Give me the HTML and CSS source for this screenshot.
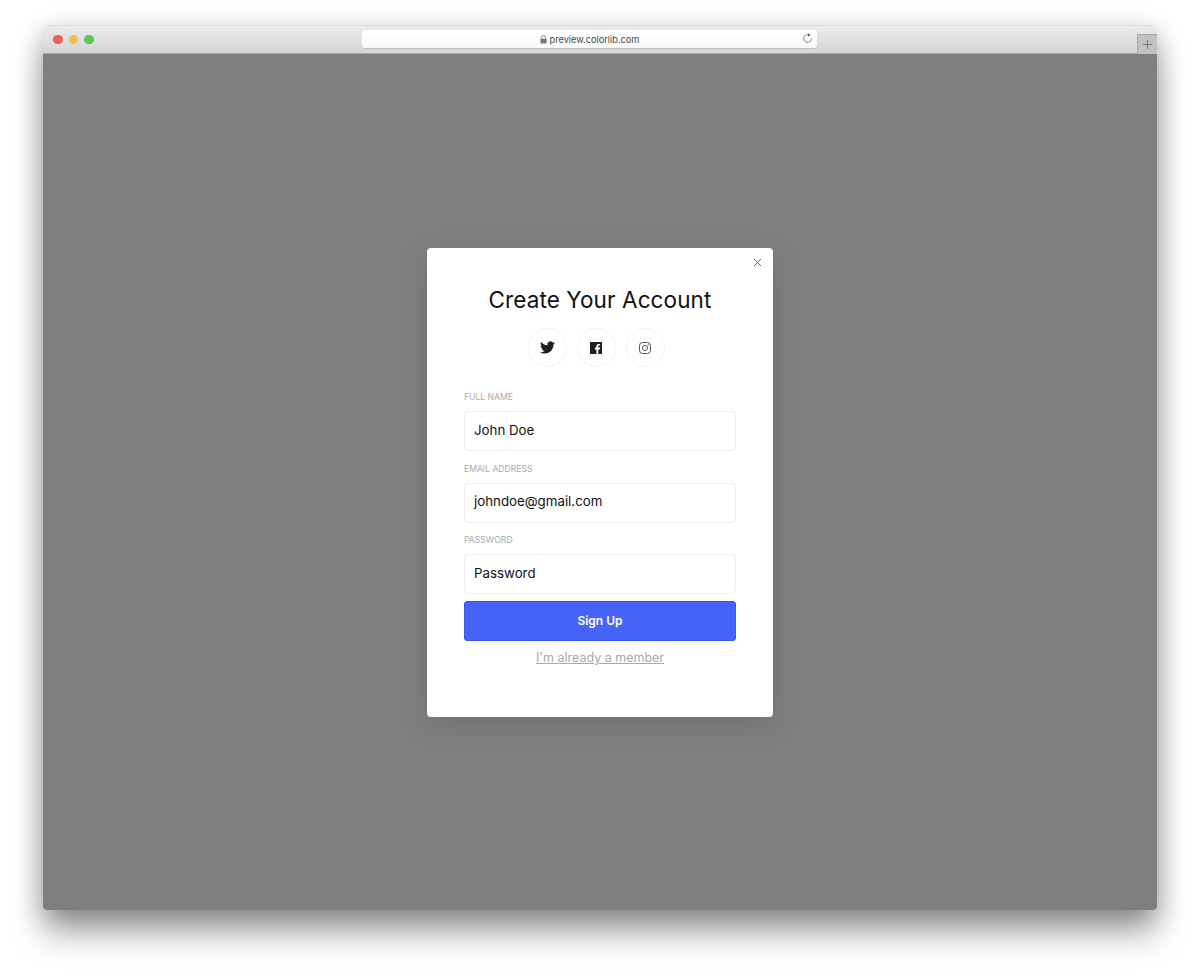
FILE: index.html
```html
<!DOCTYPE html>
<html lang="en">
<head>
<meta charset="utf-8">
<title>Create Your Account</title>
<link rel="stylesheet" href="styles.css">
</head>
<body>
<div class="window">
  <header class="toolbar">
    <div class="lights">
      <span class="light red"></span>
      <span class="light yellow"></span>
      <span class="light green"></span>
    </div>
    <div class="address">
      <span class="url">
        <svg class="lock" viewBox="0 0 8 10" width="7" height="9"><path d="M1.6 4V2.9a2.4 2.4 0 0 1 4.8 0V4" fill="none" stroke="#7a7a7a" stroke-width="1"/><rect x="0.5" y="4" width="7" height="5.5" rx="0.8" fill="#7a7a7a"/></svg>
        preview.colorlib.com
      </span>
      <svg class="reload" viewBox="0 0 12 12" width="11" height="11"><path d="M7.6 2.1A4.2 4.2 0 1 0 10.2 6" fill="none" stroke="#777" stroke-width="1"/><path d="M6.6 0.2 9.4 2.2 6.6 3.9Z" fill="#555"/></svg>
    </div>
    <div class="newtab">
      <svg viewBox="0 0 11 11" width="11" height="11"><path d="M5.5 1v9M1 5.5h9" stroke="#777" stroke-width="1" fill="none"/></svg>
    </div>
  </header>
  <main class="stage">
    <section class="modal">
      <button class="close" type="button" aria-label="Close">
        <svg viewBox="0 0 9 9" width="9" height="9"><path d="M1 1l7 7M8 1L1 8" stroke="#666" stroke-width="1" fill="none"/></svg>
      </button>
      <h1 class="title">Create Your Account</h1>
      <div class="socials">
        <a class="social">
          <svg viewBox="0 0 24 24" width="15" height="15"><path fill="#1f1f1f" d="M23.95 4.57a10 10 0 0 1-2.82.77 4.96 4.96 0 0 0 2.16-2.72c-.95.55-2 .96-3.13 1.19a4.92 4.92 0 0 0-8.38 4.48C7.69 8.1 4.07 6.13 1.64 3.16a4.82 4.82 0 0 0-.67 2.48c0 1.71.87 3.21 2.19 4.1a4.9 4.9 0 0 1-2.23-.62v.06a4.92 4.92 0 0 0 3.95 4.83 5 5 0 0 1-2.21.08 4.94 4.94 0 0 0 4.6 3.42A9.87 9.87 0 0 1 0 19.54a14 14 0 0 0 7.56 2.21c9.05 0 14-7.5 14-13.98 0-.21 0-.42-.02-.63a9.94 9.94 0 0 0 2.41-2.57z"/></svg>
        </a>
        <a class="social">
          <svg viewBox="0 0 12 12" width="12" height="12"><path fill="#1f1f1f" d="M0.7 0h10.6a.7.7 0 0 1 .7.7v10.6a.7.7 0 0 1-.7.7H8.3V7.4h1.5l.25-1.8H8.3V4.5c0-.55.15-.9.9-.9h.95V2c-.2 0-.75-.07-1.4-.07-1.4 0-2.33.85-2.33 2.4v1.27H4.9v1.8h1.52V12H.7a.7.7 0 0 1-.7-.7V.7A.7.7 0 0 1 .7 0z"/></svg>
        </a>
        <a class="social">
          <svg viewBox="0 0 12 12" width="12" height="12"><rect x="0.5" y="0.5" width="11" height="11" rx="3" fill="none" stroke="#555" stroke-width="1"/><circle cx="6" cy="6" r="2.5" fill="none" stroke="#555" stroke-width="1"/><circle cx="9.1" cy="2.9" r="0.7" fill="#555"/></svg>
        </a>
      </div>
      <form class="form">
        <div class="field">
          <label class="label">FULL NAME</label>
          <div class="input">John Doe</div>
        </div>
        <div class="field">
          <label class="label">EMAIL ADDRESS</label>
          <div class="input">johndoe@gmail.com</div>
        </div>
        <div class="field">
          <label class="label">PASSWORD</label>
          <div class="input">Password</div>
        </div>
        <button class="submit" type="button">Sign Up</button>
      </form>
      <a class="member">I'm already a member</a>
    </section>
  </main>
</div>
</body>
</html>
```

FILE: styles.css
```css
* { box-sizing: border-box; }
html, body { height: 100%; }
body {
  margin: 0;
  padding: 25px 43px 62px;
  background: #fff;
  font-family: "Inter", "Noto Sans", "Liberation Sans", sans-serif;
  overflow: hidden;
}
.window {
  height: 885px;
  display: flex;
  flex-direction: column;
  border-radius: 4px;
  overflow: hidden;
  box-shadow: 0 24px 34px -2px rgba(0,0,0,.36), 0 6px 26px rgba(0,0,0,.22);
}
.toolbar {
  height: 29px;
  flex: none;
  display: flex;
  align-items: flex-start;
  position: relative;
  background: linear-gradient(#ebebed, #d5d5d7);
  border-top: 1px solid #dedee0;
  border-bottom: 1px solid #a9a9a9;
}
.lights { display: flex; gap: 6px; padding: 8.5px 0 0 10px; }
.light { width: 9.5px; height: 9.5px; border-radius: 50%; }
.red { background: #ec5f59; }
.yellow { background: #f4bd4f; }
.green { background: #5cc84f; }
.address {
  position: absolute;
  left: 319px;
  top: 4px;
  width: 455px;
  height: 18px;
  display: flex;
  align-items: center;
  justify-content: center;
  background: linear-gradient(#fff, #f8f8f9);
  border-radius: 3px;
  box-shadow: 0 1px 1px rgba(0,0,0,.12);
  font-size: 9.2px;
  color: #4a4a4a;
}
.url { display: flex; align-items: center; gap: 3px; }
.reload { position: absolute; right: 4px; top: 3px; }
.newtab {
  position: absolute;
  right: 0;
  top: 8px;
  width: 20px;
  height: 20px;
  display: flex;
  align-items: center;
  justify-content: center;
  background: #c2c2c3;
  border-left: 1px solid #a9a9a9;
  border-top: 1px solid #a9a9a9;
}
.stage {
  flex: 1;
  display: flex;
  align-items: flex-start;
  justify-content: center;
  padding-top: 194px;
  background: #7f7f7f;
}
.modal {
  position: relative;
  width: 346px;
  height: 469px;
  padding: 37px 37px 0;
  background: #fff;
  border-radius: 4px;
  box-shadow: 0 8px 30px rgba(0,0,0,.12);
  display: flex;
  flex-direction: column;
}
.close {
  position: absolute;
  top: 10px;
  right: 11px;
  width: 9px;
  height: 9px;
  padding: 0;
  border: 0;
  background: none;
  display: flex;
}
.title {
  margin: 0;
  text-align: center;
  font-size: 22.5px;
  line-height: 30px;
  letter-spacing: .1px;
  font-weight: 400;
  color: #111;
}
.socials {
  display: flex;
  justify-content: center;
  gap: 10px;
  margin: 13px 0 0;
  padding-right: 8px;
}
.social {
  width: 39px;
  height: 39px;
  border: 1px solid #f4f4f4;
  border-radius: 50%;
  display: flex;
  align-items: center;
  justify-content: center;
}
.form { display: flex; flex-direction: column; margin-top: 23px; }
.field { display: flex; flex-direction: column; margin-bottom: 10.5px; }
.field:last-of-type { margin-bottom: 7px; }
.label {
  height: 14px;
  margin-bottom: 7px;
  font-size: 8.6px;
  line-height: 14px;
  color: #aaa;
}
.input {
  height: 40px;
  padding: 0 9px 3px;
  display: flex;
  align-items: center;
  border: 1px solid #eee;
  border-radius: 4px;
  background: #fff;
  font-size: 13.3px;
  color: #111;
}
.submit {
  height: 40px;
  padding: 0 0 1px;
  border: 1px solid #3a58e0;
  border-radius: 3px;
  background: #4564f7;
  color: #fff;
  font: 600 12px "Inter", "Noto Sans", sans-serif;
}
.member {
  margin-top: 8px;
  text-align: center;
  font-size: 12.5px;
  line-height: 17px;
  color: #a9a9a9;
  text-decoration: underline;
}
```
